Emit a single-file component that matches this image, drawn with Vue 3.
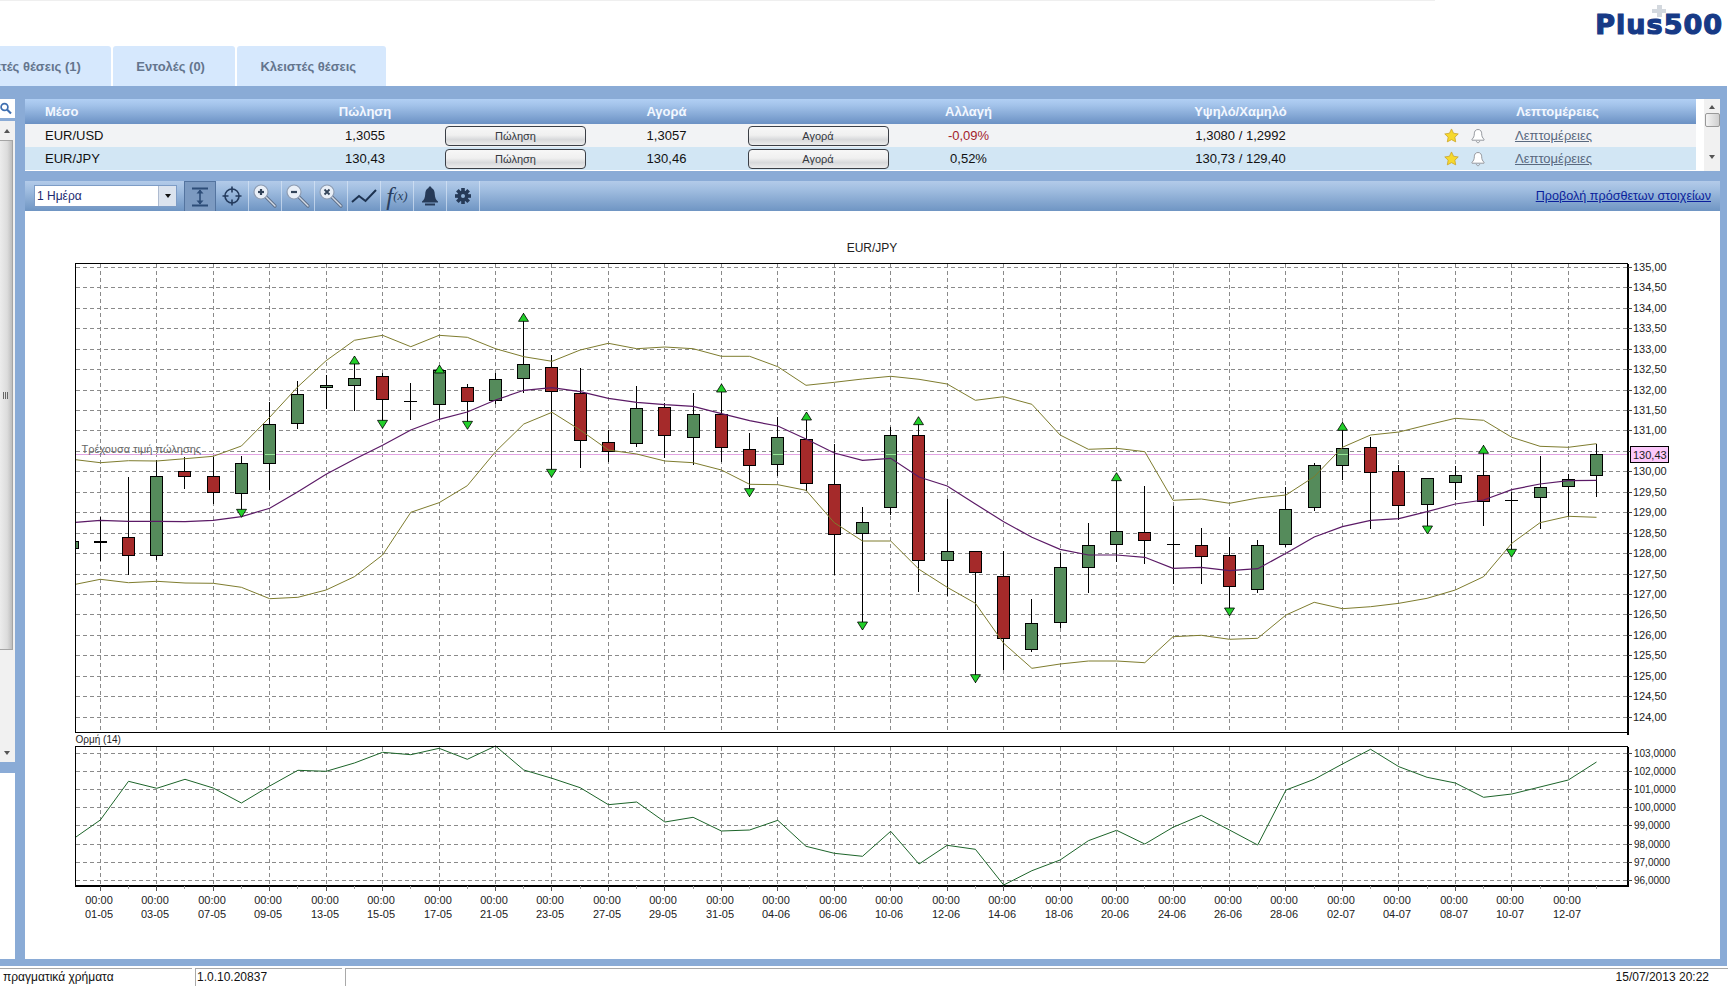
<script setup>
const X = i => 100.3 + 28.23 * i
const Y = z => 230 + z / 3
const Y2 = z => 720 + z / 3
const snap = v => Math.round(v - 0.5) + 0.5

const raw = [
  [860,992,933,933,'d2'],[741,1034,922,976,'r'],[690,990,739,976,'g'],[680,776,724,739,'r'],[680,822,739,787,'r'],
  [678,862,700,790,'g','d'],[517,780,583,700,'g'],[453,597,493,580,'g'],[434,538,466,472,'g'],[378,542,445,466,'g','u'],
  [428,595,439,508,'r','d'],[460,570,514,514,'d'],[405,570,421,523,'g','u'],[462,598,472,512,'r','d'],[430,523,448,511,'g'],
  [250,490,403,445,'g','u'],[375,742,412,484,'r','d'],[415,713,489,631,'r'],[600,695,637,662,'r'],[468,650,535,640,'g'],
  [518,685,532,616,'r'],[490,704,553,622,'g'],[462,697,553,652,'r','u'],[608,800,658,706,'r','d'],[560,738,622,703,'g'],
  [546,782,628,760,'r','u'],[642,1034,763,913,'r'],[830,1200,877,910,'g','d'],[592,855,616,832,'g'],[560,1086,616,991,'r','u'],
  [808,1097,964,991,'g'],[964,1358,964,1027,'r','d'],[964,1320,1039,1225,'r'],[1107,1265,1180,1258,'g'],[968,1193,1012,1177,'g'],
  [880,1088,946,1012,'g'],[728,996,904,943,'g','u'],[769,1001,907,931,'r'],[827,1062,943,943,'d'],[895,1061,946,979,'r'],
  [920,1158,975,1069,'r','d'],[930,1090,946,1078,'g'],[770,950,838,943,'g'],[700,842,706,832,'g'],[577,750,655,706,'g','u'],
  [622,897,652,727,'r'],[705,870,724,826,'r'],[745,912,745,823,'g','d'],[708,810,736,757,'g'],[646,887,736,814,'r','u'],
  [785,982,811,811,'d','d'],[678,897,772,802,'g'],[733,860,748,769,'g'],[641,800,673,736,'g']
]
const priceY = 454.5
const candles = raw.map((c, i) => {
  const x = snap(X(i))
  const top = Y(c[0])
  const bottom = Y(c[1])
  const y1 = Math.round(Y(c[2])) + 0.5
  const y2 = Math.round(Y(c[3])) + 0.5
  let arrow = null
  if (c[5] === 'u') arrow = `${x},${top} ${x - 5},${top + 8} ${x + 5},${top + 8}`
  if (c[5] === 'd') arrow = `${x},${bottom} ${x - 5},${bottom - 8} ${x + 5},${bottom - 8}`
  return { i, x, top, bottom, y1, h: y2 - y1, type: c[4], arrow, flash: c[4] === 'g' && y1 < priceY && y2 > priceY }
})

const path = (start, values, fy) => {
  const pts = [`75.5,${fy(start).toFixed(1)}`]
  values.forEach((z, i) => pts.push(`${X(i).toFixed(1)},${fy(z).toFixed(1)}`))
  return pts.join(' ')
}
const upper = path(689, [698,692,693,686,679,648,562,470,392,331,316,350,316,322,356,380,394,360,340,356,351,356,379,379,410,466,457,447,439,448,462,511,500,523,615,658,655,665,811,807,820,804,795,740,652,615,606,585,565,571,622,649,652,641], Y)
const lower = path(1063, [1048,1058,1054,1059,1060,1072,1106,1102,1080,1040,975,847,818,767,665,582,547,600,660,672,693,698,720,763,764,781,878,933,933,1018,1072,1120,1240,1315,1302,1293,1293,1298,1220,1216,1228,1225,1155,1117,1136,1130,1120,1105,1080,1040,940,878,859,862], Y)
const mid = path(877, [871,874,874,875,871,860,835,785,733,688,646,600,568,546,510,481,473,485,505,517,524,529,551,572,588,627,669,691,685,741,768,822,875,922,958,975,975,982,1015,1012,1022,1016,970,921,890,871,866,845,822,810,779,762,752,751], Y)
const momentum = path(352, [300,184,205,178,204,249,198,151,154,129,97,104,85,118,78,150,175,203,254,246,306,292,333,330,301,379,400,409,334,432,376,388,495,452,420,362,331,372,322,286,330,375,210,178,132,88,140,172,189,232,222,201,180,126], Y2)

const dates = ['01-05','03-05','07-05','09-05','13-05','15-05','17-05','21-05','23-05','27-05','29-05','31-05','04-06','06-06','10-06','12-06','14-06','18-06','20-06','24-06','26-06','28-06','02-07','04-07','08-07','10-07','12-07']
const vLines = dates.map((d, i) => ({ d, x: snap(X(i * 2)) }))
const minor = dates.map((d, i) => snap(X(i * 2 + 1)))

const prices = Array.from({ length: 23 }, (_, i) => {
  const p = 135 - i * 0.5
  return { t: p.toFixed(2).replace('.', ','), y: snap(267.3 + i * 20.45) }
})
const priceLabels = prices.filter(p => p.t !== '130,50')
const moms = Array.from({ length: 8 }, (_, i) => ({
  t: (103 - i).toFixed(4).replace('.', ','),
  y: snap(753.3 + i * 18.14)
}))

const rows = [
  { name: 'EUR/USD', sell: '1,3055', buy: '1,3057', chg: '-0,09%', neg: true, hl: '1,3080 / 1,2992', cls: 'odd' },
  { name: 'EUR/JPY', sell: '130,43', buy: '130,46', chg: '0,52%', neg: false, hl: '130,73 / 129,40', cls: 'even' }
]
const zooms = ['+', '-', 'x']
</script>

<template>
  <div class="app">
    <header class="head">
      <div class="hairline"></div>
      <div class="logo-row">
        <div class="logo">
          <span class="logo-plus"></span>
          <span class="logo-text">Plus500</span>
        </div>
      </div>
    </header>
    <nav class="tabs">
      <div class="tab first">Ανοικτές θέσεις (1)</div>
      <div class="tab">Εντολές (0)</div>
      <div class="tab">Κλειστές θέσεις</div>
    </nav>

    <main class="panel">
      <aside class="side">
        <div class="search">
          <svg width="14" height="14" viewBox="0 0 14 14"><circle cx="4.5" cy="5" r="3.4" fill="#fff" stroke="#3f6fb0" stroke-width="1.7"/><path d="M7 7.5l4 4" stroke="#3f6fb0" stroke-width="2.2"/></svg>
        </div>
        <div class="scroller">
          <div class="sc-btn"><i class="tri up"></i></div>
          <div class="sc-thumb"><i class="grip"></i></div>
          <div class="sc-rest"><i class="tri down"></i></div>
        </div>
        <div class="side-blank"></div>
      </aside>

      <section class="center">
        <div class="grid-wrap">
          <div class="grid">
            <div class="row hdr">
              <span class="left">Μέσο</span><span>Πώληση</span><span></span><span>Αγορά</span><span></span><span>Αλλαγή</span><span>Υψηλό/Χαμηλό</span><span></span><span></span><span class="hdr-d">Λεπτομέρειες</span><span></span>
            </div>
            <div v-for="r in rows" :key="r.name" class="row" :class="r.cls">
              <span class="left">{{ r.name }}</span>
              <span>{{ r.sell }}</span>
              <span><button class="btn">Πώληση</button></span>
              <span>{{ r.buy }}</span>
              <span><button class="btn">Αγορά</button></span>
              <span :class="{ neg: r.neg }">{{ r.chg }}</span>
              <span>{{ r.hl }}</span>
              <span class="ic">
                <svg width="15" height="15" viewBox="0 0 16 16"><path d="M8 1l2.2 4.6 5 .7-3.6 3.500.9 5L8 12.400l-4.500 2.400.9-5L.8 6.300l5-.7z" fill="#f6d92d" stroke="#c9a227" stroke-width=".8"/></svg>
              </span>
              <span class="ic">
                <svg width="16" height="16" viewBox="0 0 16 16"><path d="M8 1.500c-2.600 0-3.700 2-3.700 4.300 0 2.600-.8 4-2.300 5.400v1h12v-1c-1.500-1.400-2.300-2.800-2.300-5.400 0-2.300-1.100-4.300-3.700-4.300z" fill="#fff" stroke="#96999f"/><path d="M6.300 13c.2 1 .8 1.700 1.700 1.700s1.500-.7 1.700-1.700" fill="none" stroke="#96999f"/></svg>
              </span>
              <span><a class="detail">Λεπτομέρειες</a></span>
              <span></span>
            </div>
          </div>
          <div class="gutter">
            <div class="vscroll">
              <i class="tri up"></i>
              <div class="vthumb"></div>
              <i class="tri down"></i>
            </div>
          </div>
        </div>

        <div class="toolbar">
          <div class="combo"><span class="combo-t">1 Ημέρα</span><span class="combo-b"><i class="tri down black"></i></span></div>
          <div class="tools">
            <div class="tool active">
              <svg width="22" height="22" viewBox="0 0 22 22"><path d="M3 2.500h16M3 19.500h16" stroke="#2d4d78" stroke-width="2"/><path d="M11 4v14" stroke="#2d4d78" stroke-width="1.600"/><path d="M11 3.500l3.500 4h-7zM11 18.500l3.500-4h-7z" fill="#2d4d78"/></svg>
            </div>
            <div class="tool">
              <svg width="22" height="22" viewBox="0 0 22 22"><circle cx="11" cy="11" r="7" fill="none" stroke="#233a5c" stroke-width="1.600"/><path d="M11 1.500v6M11 14.500v6M1.500 11h6M14.500 11h6" stroke="#233a5c" stroke-width="1.600"/></svg>
            </div>
            <div v-for="z in zooms" :key="z" class="tool">
              <svg width="26" height="26" viewBox="0 0 26 26">
                <path d="M13.500 13.500l9.500 9.500" stroke="#5e6f88" stroke-width="3.200" stroke-linecap="round"/>
                <path d="M13.500 13.500l9.500 9.500" stroke="#d3dbe6" stroke-width="1.400" stroke-linecap="round"/>
                <circle cx="9" cy="9" r="7" fill="#e9eff7" stroke="#8e9db3" stroke-width="1.200"/>
                <path v-if="z !== 'x'" d="M6 9h6" stroke="#334459" stroke-width="2.200"/>
                <path v-if="z === '+'" d="M9 6v6" stroke="#334459" stroke-width="2.200"/>
                <path v-if="z === 'x'" d="M6.500 6.500l5 5M11.500 6.500l-5 5" stroke="#334459" stroke-width="1.800"/>
              </svg>
            </div>
            <div class="tool">
              <svg width="28" height="20" viewBox="0 0 28 20"><path d="M2 16l7-6 6.500 5L26 4" fill="none" stroke="#1d3250" stroke-width="2"/></svg>
            </div>
            <div class="tool fx"><span class="f">f</span><span class="x">(x)</span></div>
            <div class="tool">
              <svg width="20" height="22" viewBox="0 0 20 22"><path d="M10 1.500c-1 0-1.500.7-1.500 1.500C6 4 5.300 6.500 5.200 9.500 5 13 4 15 2 16.500v1h16v-1c-2-1.500-3-3.500-3.200-7C14.700 6.500 14 4 11.500 3c0-.8-.5-1.500-1.500-1.500z" fill="#263a58"/><path d="M5 19.500h10" stroke="#263a58" stroke-width="2"/></svg>
            </div>
            <div class="tool">
              <svg width="18" height="18" viewBox="-9 -9 18 18">
                <g fill="#263a58">
                  <rect v-for="a in [0, 45, 90, 135]" :key="a" x="-1.800" y="-8" width="3.600" height="16" :transform="`rotate(${a})`"/>
                  <circle r="5.600"/>
                </g>
                <circle r="2" fill="#8fb0d6"/>
              </svg>
            </div>
          </div>
          <a class="more">Προβολή πρόσθετων στοιχείων</a>
        </div>

        <div class="chart-box">
          <svg class="chart" width="1695" height="748" viewBox="25 211 1695 748">
            <text x="872" y="252" text-anchor="middle" class="t12">EUR/JPY</text>

            <g shape-rendering="crispEdges">
              <g stroke="#8a8a8a" stroke-dasharray="4 3">
                <line v-for="p in prices" :key="p.t" x1="76" x2="1627" :y1="p.y" :y2="p.y"/>
                <line v-for="v in vLines" :key="v.d" :x1="v.x" :x2="v.x" y1="264" y2="732"/>
                <line v-for="m in moms" :key="m.t" x1="76" x2="1627" :y1="m.y" :y2="m.y"/>
                <line v-for="v in vLines" :key="'l' + v.d" :x1="v.x" :x2="v.x" y1="747" y2="885"/>
              </g>
              <line x1="76" x2="1627" y1="454.5" y2="454.5" stroke="#e2a4e2"/>

              <g v-for="c in candles" :key="c.i">
                <line :x1="c.x" :x2="c.x" :y1="c.top" :y2="c.bottom" stroke="#000"/>
                <rect v-if="c.type === 'g' || c.type === 'r'" :x="c.x - 6" :y="c.y1" width="12" :height="c.h" :fill="c.type === 'g' ? '#558b5b' : '#a52a2a'" stroke="#000"/>
                <line v-if="c.type === 'd' || c.type === 'd2'" :x1="c.x - 6.500" :x2="c.x + 6.500" :y1="c.y1" :y2="c.y1" stroke="#000" :stroke-width="c.type === 'd2' ? 2 : 1"/>
                <line v-if="c.flash" :x1="c.x - 5" :x2="c.x + 5" y1="454.5" y2="454.5" stroke="#95e695"/>
              </g>
              <rect x="75.500" y="541.500" width="3" height="7" fill="#558b5b" stroke="#000"/>
            </g>

            <g fill="none">
              <polyline :points="upper" stroke="#7e7c2e"/>
              <polyline :points="lower" stroke="#7e7c2e"/>
              <polyline :points="mid" stroke="#5b1a66" stroke-width="1.200"/>
              <polyline :points="momentum" stroke="#1c6429"/>
            </g>
            <g>
              <polygon v-for="c in candles.filter(k => k.arrow)" :key="'a' + c.i" :points="c.arrow" fill="#22cf2a" stroke="#000" stroke-width=".8"/>
            </g>

            <g shape-rendering="crispEdges" fill="none" stroke="#000">
              <path d="M75.500 263.500H1627.500V732.500H75.500Z"/>
              <path d="M75.500 746.500H1627.500V885.500H75.500Z"/>
              <path d="M1628 264V735M1628 747V887" stroke-width="2"/>
              <path d="M75 885.500H1628" stroke-width="2"/>
              <line v-for="p in prices" :key="'t' + p.t" x1="1628" x2="1632" :y1="p.y" :y2="p.y" stroke="#444"/>
              <line v-for="m in moms" :key="'t' + m.t" x1="1628" x2="1632" :y1="m.y" :y2="m.y" stroke="#444"/>
              <line v-for="v in vLines" :key="'b' + v.d" :x1="v.x" :x2="v.x" y1="886" y2="891" stroke="#555"/>
              <line v-for="m in minor" :key="'m' + m" :x1="m" :x2="m" y1="886" y2="889" stroke="#999"/>
            </g>

            <text x="81.500" y="453" class="t11 gray">Τρέχουσα τιμή πώλησης</text>
            <text x="75.500" y="743" class="t10">Ορμή (14)</text>

            <text v-for="p in priceLabels" :key="'l' + p.t" x="1633" :y="p.y + 3" class="t11">{{ p.t }}</text>
            <rect x="1630.500" y="446.500" width="38" height="16" fill="#fcc8fb" stroke="#000" shape-rendering="crispEdges"/>
            <text x="1633" y="459" class="t11">130,43</text>
            <text v-for="m in moms" :key="'q' + m.t" x="1634" :y="m.y + 3" class="t10">{{ m.t }}</text>

            <g v-for="v in vLines" :key="'x' + v.d">
              <text :x="v.x - 1.500" y="904" text-anchor="middle" class="t11">00:00</text>
              <text :x="v.x - 1.500" y="918" text-anchor="middle" class="t11">{{ v.d }}</text>
            </g>
          </svg>
        </div>
      </section>
    </main>

    <footer class="status">
      <div class="cell c1">πραγματικά χρήματα</div>
      <div class="cell c2">1.0.10.20837</div>
      <div class="cell c3">15/07/2013 20:22</div>
    </footer>
  </div>
</template>

<style>
html, body { margin: 0; padding: 0; background: #fff; overflow: hidden; }
</style>

<style scoped>
.app {
  width: 1728px;
  height: 986px;
  display: flex;
  flex-direction: column;
  overflow: hidden;
  background: #fff;
  font-family: "Liberation Sans", Arial, sans-serif;
  color: #111;
}
.head { height: 46px; flex: none; }
.hairline { width: 1435px; height: 1px; background: #efefef; }
.logo-row { display: flex; justify-content: flex-end; padding-right: 5px; }
.logo { position: relative; height: 32px; margin-top: 8px; }
.logo-text {
  display: block;
  font-family: "DejaVu Sans", sans-serif;
  font-weight: 700;
  font-size: 27px;
  line-height: 32px;
  letter-spacing: 1px;
  color: #173a86;
  -webkit-text-stroke: 1.2px #173a86;
  white-space: nowrap;
}
.logo-plus {
  position: absolute;
  left: 57px;
  top: -4px;
  width: 14px;
  height: 12px;
  background:
    linear-gradient(#d3d8de, #d3d8de) center / 14px 4px no-repeat,
    linear-gradient(#d3d8de, #d3d8de) center / 5px 12px no-repeat;
}
.tabs { height: 40px; flex: none; display: flex; gap: 2.5px; align-items: stretch; }
.tab {
  background: #d6e8fd;
  border-radius: 3px 3px 0 0;
  padding: 0 30px 0 23px;
  display: flex;
  align-items: center;
  font-size: 13px;
  font-weight: 700;
  color: #64758d;
  white-space: nowrap;
}
.first { margin-left: -57px; }

.panel {
  height: 880px;
  flex: none;
  box-sizing: border-box;
  background: #8aabd6;
  margin-right: 1px;
  padding: 13px 7px 7px 0;
  display: flex;
  gap: 10px;
}
.side { width: 15px; flex: none; display: flex; flex-direction: column; }
.search {
  height: 19px;
  background: #fff;
  display: flex;
  justify-content: flex-end;
  align-items: center;
  overflow: hidden;
  margin-bottom: 3px;
}
.search svg { flex: none; margin-right: 1px; }
.scroller { height: 641px; background: #f1f1f1; display: flex; flex-direction: column; margin-bottom: 11px; }
.sc-btn { height: 19px; display: flex; justify-content: center; align-items: center; padding-right: 2px; }
.sc-thumb {
  height: 510px;
  width: 13px;
  box-sizing: border-box;
  border: 1px solid #a5a5a5;
  border-left: 0;
  background: linear-gradient(90deg, #ececec, #dcdcdc 60%, #bdbdbd);
  display: flex;
  align-items: center;
  justify-content: center;
}
.grip { width: 6px; height: 7px; background: repeating-linear-gradient(90deg, #666 0 1px, transparent 1px 2px); }
.sc-rest { flex: 1; display: flex; align-items: flex-end; justify-content: center; padding: 0 2px 7px 0; }
.side-blank { flex: 1; background: #fff; }
.tri { display: block; width: 0; height: 0; border-left: 3.5px solid transparent; border-right: 3.5px solid transparent; }
.tri.up { border-bottom: 4px solid #555; }
.tri.down { border-top: 4px solid #555; }
.tri.black { border-top-color: #111; }

.center { flex: 1; min-width: 0; display: flex; flex-direction: column; gap: 10px; }
.grid-wrap { display: flex; height: 72px; flex: none; }
.grid { width: 1671px; flex: none; display: flex; flex-direction: column; }
.row {
  display: grid;
  grid-template-columns: 260px 160px 141px 161px 142px 159px 385px 36px 18px 133px 76px;
  align-items: center;
  text-align: center;
  font-size: 13px;
  height: 23px;
}
.row > span { display: flex; align-items: center; justify-content: center; }
.row > .left { justify-content: flex-start; padding-left: 20px; }
.hdr {
  height: 25px;
  background: linear-gradient(#b1cff4, #a3c3ea 25%, #6b91c4);
  color: #f2f7ff;
  font-weight: 700;
}
.row > .hdr-d { white-space: nowrap; padding-left: 8px; }
.odd { background: #f2f3f5; }
.even { background: #d2e6f4; border-bottom: 1px solid #fff; height: 24px; box-sizing: border-box; }
.neg { color: #a3222b; }
.btn {
  width: 141px;
  height: 20px;
  padding: 0;
  border: 1px solid #3b3f46;
  border-radius: 4px;
  background: linear-gradient(#f7f7f7, #f0f0f0 45%, #d8d9db 70%, #ececec);
  font-family: inherit;
  font-size: 11px;
  color: #33373d;
}
.detail { color: #59697f; text-decoration: underline; white-space: nowrap; }
.ic { display: flex; }
.gutter { flex: 1; background: #fff; display: flex; justify-content: flex-end; }
.vscroll {
  width: 16px;
  background: #f1f1f1;
  display: flex;
  flex-direction: column;
  align-items: center;
  padding-top: 6px;
  box-sizing: border-box;
}
.vthumb {
  width: 15px;
  height: 14px;
  margin: 4px 0 28px;
  box-sizing: border-box;
  border: 1px solid #999;
  border-radius: 2px;
  background: linear-gradient(90deg, #f4f4f4, #cfcfcf);
}

.toolbar {
  height: 30px;
  flex: none;
  display: flex;
  align-items: center;
  background: linear-gradient(#b3cbe9, #a0bde0 30%, #6f95c3);
  padding-left: 9px;
}
.combo {
  width: 143px;
  height: 22px;
  flex: none;
  box-sizing: border-box;
  border: 1px solid #7d9cc6;
  background: #fff;
  display: flex;
  align-items: stretch;
  margin-right: 7px;
}
.combo-t { flex: 1; font-size: 12px; color: #1b2a70; line-height: 20px; padding-left: 2px; }
.combo-b { width: 17px; background: #dbe3ee; border-left: 1px solid #aebbd0; display: flex; align-items: center; justify-content: center; }
.tools { display: flex; height: 30px; flex: 1; }
.tool {
  width: 33px;
  height: 30px;
  flex: none;
  box-sizing: border-box;
  border-right: 1px solid rgba(220, 232, 247, .65);
  display: flex;
  align-items: center;
  justify-content: center;
}
.tool.active { width: 32px; background: #7c9ac1; border: 1px solid #54749f; border-bottom: 0; }
.fx { font-family: "Liberation Serif", serif; font-style: italic; color: #2a3f5f; }
.fx .f { font-size: 25px; line-height: 1; }
.fx .x { font-size: 13px; }
.more {
  margin-right: 9px;
  font-size: 12.6px;
  color: #0b1f9c;
  text-decoration: underline;
  white-space: nowrap;
}
.chart-box { flex: 1; min-height: 0; background: #fff; margin-top: -10px; }
.chart { display: block; }
.t12 { font-size: 12px; fill: #222; }
.t11 { font-size: 11px; fill: #222; }
.t10 { font-size: 10px; fill: #222; }
.gray { fill: #666; }
text { font-family: "Liberation Sans", Arial, sans-serif; }

.status {
  height: 20px;
  flex: none;
  display: flex;
  box-sizing: border-box;
  padding-top: 2px;
  font-size: 12px;
}
.cell { border-top: 1px solid #a9a9a9; line-height: 17px; white-space: nowrap; }
.c1 { width: 192px; padding-left: 3px; box-sizing: border-box; margin-right: 3px; }
.c2 { width: 147px; padding-left: 1px; box-sizing: border-box; border-left: 1px solid #a9a9a9; margin-right: 3px; }
.c3 { flex: 1; text-align: right; padding-right: 19px; border-left: 1px solid #a9a9a9; }
</style>
